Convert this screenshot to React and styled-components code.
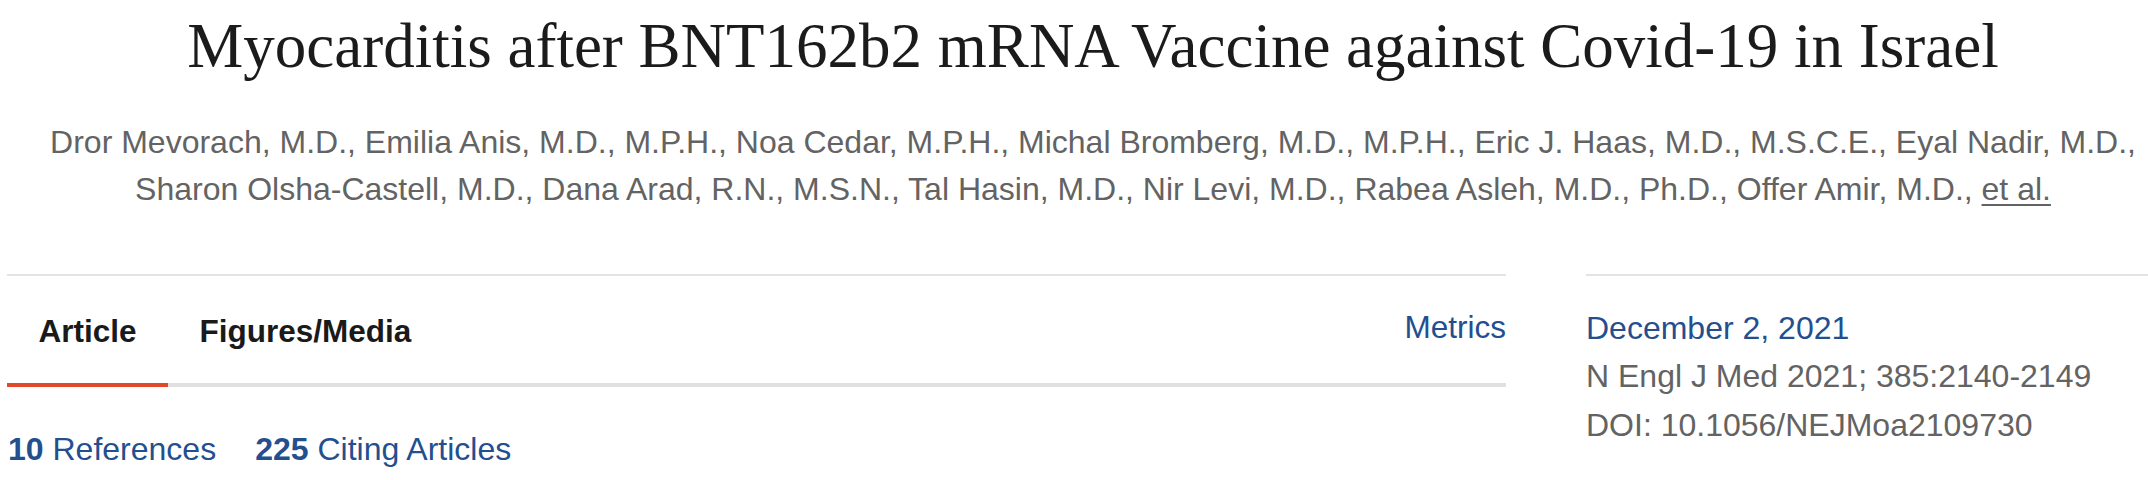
import React from "react";
import styled, { createGlobalStyle } from "styled-components";

const GlobalStyle = createGlobalStyle`
  html, body {
    margin: 0;
    padding: 0;
    background: #ffffff;
  }
  body {
    font-family: "Liberation Sans", Arial, Helvetica, sans-serif;
  }
`;

const Page = styled.div`
  width: 2148px;
  overflow: hidden;
`;

const Header = styled.header`
  padding: 9px 0 0 38px;
  text-align: center;
`;

const Title = styled.h1`
  margin: 0;
  font-family: "Liberation Serif", "Times New Roman", serif;
  font-weight: 400;
  font-size: 63px;
  line-height: 75.6px;
  color: #1b1b1b;
`;

const Authors = styled.p`
  margin: 34px 0 0;
  font-size: 32px;
  line-height: 47.6px;
  color: #636363;
`;

const EtAl = styled.a`
  color: inherit;
  text-decoration: underline;
  text-underline-offset: 4px;
  text-decoration-thickness: 2px;
`;

const Body = styled.div`
  display: flex;
  align-items: flex-start;
  margin-top: 60px;
  padding-left: 7px;
  column-gap: 80px;
`;

const Main = styled.section`
  width: 1499px;
  flex: none;
`;

const TabBar = styled.nav`
  display: flex;
  align-items: flex-end;
  border-top: 2px solid #e3e3e3;
  border-bottom: 4px solid #e0e0e0;
`;

const Tab = styled.a`
  display: block;
  padding: 28px 31.5px 28px;
  font-size: 31.5px;
  line-height: 47.6px;
  font-weight: 700;
  color: #1a1a1a;
  border-bottom: 4px solid ${(p) => (p.$active ? "#e2492c" : "transparent")};
  margin-bottom: -4px;
`;

const TabSpacer = styled.div`
  flex: 1;
`;

const MetricsLink = styled.a`
  display: block;
  padding: 28px 0 32px;
  font-size: 31.5px;
  line-height: 47.6px;
  color: #234f8f;
`;

const Counts = styled.div`
  display: flex;
  column-gap: 39px;
  margin-top: 39px;
  padding-left: 1px;
  font-size: 32px;
  line-height: 47.6px;
  color: #234f8f;
`;

const Count = styled.a`
  color: inherit;
  text-decoration: none;
  b {
    font-weight: 700;
  }
`;

const Aside = styled.aside`
  flex: 1;
  border-top: 2px solid #e3e3e3;
  padding-top: 28px;
  font-size: 32px;
  line-height: 48.5px;
  color: #636363;
`;

const DateLink = styled.a`
  display: block;
  color: #234f8f;
`;

const Meta = styled.div`
  white-space: nowrap;
`;

export default function App() {
  return (
    <Page>
      <GlobalStyle />
      <Header>
        <Title>Myocarditis after BNT162b2 mRNA Vaccine against Covid-19 in Israel</Title>
        <Authors>
          Dror Mevorach, M.D., Emilia Anis, M.D., M.P.H., Noa Cedar, M.P.H., Michal Bromberg, M.D., M.P.H., Eric J. Haas, M.D., M.S.C.E., Eyal Nadir, M.D.,
          <br />
          Sharon Olsha-Castell, M.D., Dana Arad, R.N., M.S.N., Tal Hasin, M.D., Nir Levi, M.D., Rabea Asleh, M.D., Ph.D., Offer Amir, M.D., <EtAl>et al.</EtAl>
        </Authors>
      </Header>
      <Body>
        <Main>
          <TabBar>
            <Tab $active>Article</Tab>
            <Tab>Figures/Media</Tab>
            <TabSpacer />
            <MetricsLink>Metrics</MetricsLink>
          </TabBar>
          <Counts>
            <Count>
              <b>10</b> References
            </Count>
            <Count>
              <b>225</b> Citing Articles
            </Count>
          </Counts>
        </Main>
        <Aside>
          <DateLink>December 2, 2021</DateLink>
          <Meta>N Engl J Med 2021; 385:2140-2149</Meta>
          <Meta>DOI: 10.1056/NEJMoa2109730</Meta>
        </Aside>
      </Body>
    </Page>
  );
}
